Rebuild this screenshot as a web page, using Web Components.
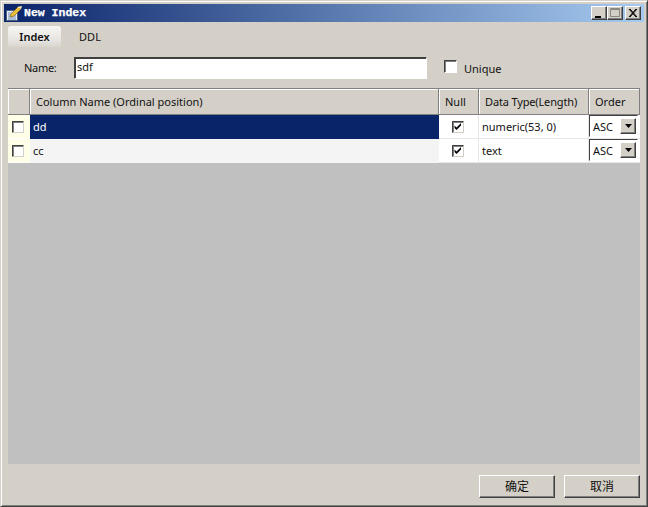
<!DOCTYPE html>
<html>
<head>
<meta charset="utf-8">
<title>New Index</title>
<style>
  html, body { margin: 0; padding: 0; background: #d4d0c8; }
  body { font: 11px "Noto Sans", "Noto Sans CJK SC", sans-serif; color: #111; }
</style>
</head>
<body>
<index-window caption="New Index">
  <tab-bar slot="tabs"></tab-bar>
  <name-row slot="name" value="sdf"></name-row>
  <column-grid slot="grid"></column-grid>
  <win-button slot="buttons">确定</win-button>
  <win-button slot="buttons">取消</win-button>
</index-window>

<script>
const RAISED = 'border: 1px solid; border-color: #fff #404040 #404040 #fff; box-shadow: inset -1px -1px 0 #808080;';
const SUNKEN = 'border: 1px solid; border-color: #404040 #fff #fff #404040;';

class IndexWindow extends HTMLElement {
  constructor() {
    super();
    this.attachShadow({ mode: 'open' });
  }

  connectedCallback() {
    const caption = this.getAttribute('caption');
    this.shadowRoot.innerHTML = `
      <style>
        :host { display: block; width: 648px; height: 507px; box-sizing: border-box;
          border: 1px solid; border-color: #d4d0c8 #404040 #404040 #d4d0c8;
          box-shadow: inset 1px 1px 0 #fff, inset -1px -1px 0 #808080; padding: 3px; }
        .frame { display: flex; flex-direction: column; height: 100%; }
        .title { flex: 0 0 18px; min-height: 0; overflow: hidden; display: flex; align-items: center; gap: 1px;
          background: linear-gradient(90deg, #0a246a, #a6caf0); color: #fff; padding-left: 1px; }
        .title svg { flex: none; }
        .title span { font: bold 11.5px/16px "Liberation Mono", monospace; flex: 1; -webkit-text-stroke: .25px #fff; }
        .ctl { display: flex; margin-right: 3px; }
        .ctl i { width: 16px; height: 14px; box-sizing: border-box; background: #d4d0c8; display: flex;
          ${RAISED} }
        .ctl i:last-child { margin-left: 2px; }
        .ctl svg { display: block; }
        .tabs { margin: 4px 0 0 4px; height: 22px; }
        .name { margin: 9px 0 0 0; height: 22px; }
        .grid { margin: 9px 0 0 4px; width: 632px; flex: 1; display: flex; }
        .buttons { flex: 0 0 39px; display: flex; justify-content: flex-end; gap: 9px;
          padding: 11px 4px 0 0; box-sizing: border-box; }
      </style>
      <div class="frame">
        <div class="title">
          <svg width="18" height="17" viewBox="0 0 18 17">
            <path d="M1.500 5.500h11v10h-11z" fill="#e6edf7" stroke="#4a5f80"/>
            <path d="M3 8h8M3 10h8M3 12h8M3 14h8" stroke="#6f8fbc"/>
            <path d="M6 9l7-7 3 2-7 7-4 1z" fill="#eebf3e" stroke="#8a6a12" stroke-width=".7"/>
            <path d="M12 2l5-1-1 3z" fill="#fff3c0"/>
          </svg>
          <span>${caption}</span>
          <div class="ctl">
            <i><svg width="14" height="12"><path d="M3 9h6v2H3z" fill="#000"/></svg></i>
            <i><svg width="14" height="12"><path d="M2.500 1.500h9v8h-9z M2.500 2.500h9" fill="none" stroke="#8a8880"/></svg></i>
            <i><svg width="14" height="12"><path d="M3 2l7 8M4 2l7 8M10 2l-7 8M11 2l-7 8" stroke="#000"/></svg></i>
          </div>
        </div>
        <div class="tabs"><slot name="tabs"></slot></div>
        <div class="name"><slot name="name"></slot></div>
        <div class="grid"><slot name="grid"></slot></div>
        <div class="buttons"><slot name="buttons"></slot></div>
      </div>
    `;
  }
}
customElements.define('index-window', IndexWindow);

class TabBar extends HTMLElement {
  constructor() {
    super();
    this.attachShadow({ mode: 'open' });
    this.shadowRoot.innerHTML = `
      <style>
        :host { display: flex; height: 22px; }
        .tab { height: 21px; line-height: 22px; text-align: center; box-sizing: border-box; }
        .on { width: 53px; font-weight: 600; border-radius: 3px 3px 0 0;
          background: linear-gradient(#f6f6f4, #e6e4e0 70%, #d8d5ce); }
        .off { width: 58px; }
      </style>
      <div class="tab on">Index</div>
      <div class="tab off">DDL</div>
    `;
  }
}
customElements.define('tab-bar', TabBar);

class NameRow extends HTMLElement {
  constructor() {
    super();
    this.attachShadow({ mode: 'open' });
  }

  connectedCallback() {
    this.shadowRoot.innerHTML = `
      <style>
        :host { display: flex; height: 22px; align-items: center; }
        .label { margin: 0 0 2px 20px; width: 50px; letter-spacing: -.3px; }
        .input { width: 353px; height: 22px; box-sizing: border-box; background: #fff; line-height: 18px;
          padding-left: 2px; ${SUNKEN} box-shadow: inset 1px 1px 0 #404040; }
        .check { width: 13px; height: 13px; box-sizing: border-box; background: #fff; margin: 0 0 3px 17px;
          ${SUNKEN} box-shadow: inset 1px 1px 0 #808080; }
        .unique { margin: 1px 0 0 7px; }
      </style>
      <span class="label">Name:</span>
      <div class="input">${this.getAttribute('value')}</div>
      <div class="check"></div>
      <span class="unique">Unique</span>
    `;
  }
}
customElements.define('name-row', NameRow);

class CheckBox extends HTMLElement {
  constructor() {
    super();
    this.attachShadow({ mode: 'open' });
  }

  connectedCallback() {
    const tick = this.hasAttribute('checked')
      ? '<svg width="10" height="10" viewBox="0 0 10 10"><path d="M1.500 3.500l2 2 4.500-4.500v2.500l-4.500 4.500-2-2z" fill="#000"/></svg>'
      : '';
    this.shadowRoot.innerHTML = `
      <style>
        :host { display: block; width: 12px; height: 12px; box-sizing: border-box; background: #fff;
          border: 1px solid; border-color: #404040 #d4d0c8 #d4d0c8 #404040; box-shadow: inset 1px 1px 0 #808080; }
        svg { display: block; }
      </style>
      ${tick}
    `;
  }
}
customElements.define('check-box', CheckBox);

class OrderCombo extends HTMLElement {
  constructor() {
    super();
    this.attachShadow({ mode: 'open' });
    this.shadowRoot.innerHTML = `
      <style>
        :host { display: flex; align-items: center; justify-content: space-between; box-sizing: border-box;
          width: 49px; height: 100%; background: #fff; padding: 0 1px 0 3px;
          border: 1px solid; border-color: #404040 #fff #fff #404040; }
        .arrow { width: 16px; height: 16px; box-sizing: border-box; background: #d4d0c8; display: flex;
          align-items: center; justify-content: center; ${RAISED} }
      </style>
      <span>ASC</span>
      <div class="arrow"><svg width="7" height="4"><path d="M0 0h7L3.500 4z" fill="#000"/></svg></div>
    `;
  }
}
customElements.define('order-combo', OrderCombo);

class ColumnGrid extends HTMLElement {
  constructor() {
    super();
    this.attachShadow({ mode: 'open' });
    this.rows = [
      { name: 'dd', type: 'numeric(53, 0)', selected: true },
      { name: 'cc', type: 'text', selected: false }
    ];
  }

  connectedCallback() {
    const rowsHtml = this.rows.map(row => `
      <div class="gut"><check-box></check-box></div>
      <div class="cell name ${row.selected ? 'sel' : 'alt'}">${row.name}</div>
      <div class="cell mid"><check-box checked></check-box></div>
      <div class="cell type">${row.type}</div>
      <div class="cell combo"><order-combo></order-combo></div>
    `).join('');

    this.shadowRoot.innerHTML = `
      <style>
        :host { display: block; width: 632px; height: 100%; background: #c0c0c0; box-sizing: border-box;
          border-top: 1px solid #808080; }
        .table { display: grid; grid-template-columns: 22px 409px 40px 110px 51px; grid-template-rows: 26px 24px 24px; }
        .head { background: #d4d0c8; border-bottom: 1px solid #808080; border-right: 1px solid #808080;
          box-shadow: inset 1px 1px 0 #fff; box-sizing: border-box; line-height: 25px; padding-left: 6px; }
        .tight { letter-spacing: -.15px; }
        .gut { background: #ffffe8; padding-left: 4px; box-sizing: border-box; border-bottom: 1px solid #fff;
          display: flex; align-items: center; }
        .cell { background: #fff; box-sizing: border-box; line-height: 23px; padding-left: 4px;
          border-bottom: 1px solid #e8e8e8; border-right: 1px solid #e8e8e8; }
        .name { padding-left: 3px; border: 0; }
        .sel { background: #0a246a; color: #fff; }
        .alt { background: #f4f4f4; }
        .mid { padding-left: 13px; display: flex; align-items: center; }
        .type { padding-left: 3px; }
        .combo { padding: 0 2px 1px 0; border-right: 0; }
      </style>
      <div class="table">
        <div class="head"></div>
        <div class="head">Column Name (Ordinal position)</div>
        <div class="head">Null</div>
        <div class="head tight">Data Type(Length)</div>
        <div class="head">Order</div>
        ${rowsHtml}
      </div>
    `;
  }
}
customElements.define('column-grid', ColumnGrid);

class WinButton extends HTMLElement {
  constructor() {
    super();
    this.attachShadow({ mode: 'open' });
    this.shadowRoot.innerHTML = `
      <style>
        :host { display: block; width: 76px; height: 23px; box-sizing: border-box; background: #d4d0c8;
          text-align: center; line-height: 22px; font-size: 12px; ${RAISED} }
      </style>
      <slot></slot>
    `;
  }
}
customElements.define('win-button', WinButton);
</script>
</body>
</html>
